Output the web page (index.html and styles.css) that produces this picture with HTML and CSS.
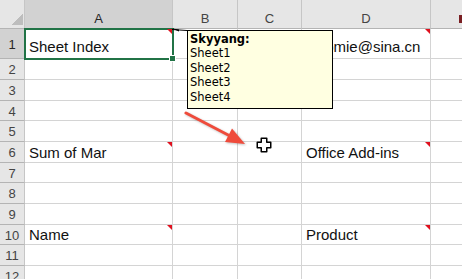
FILE: index.html
```html
<!DOCTYPE html>
<html lang="en">
<head>
  <meta charset="UTF-8">
  <title>Sheet Index</title>
  <link rel="stylesheet" href="styles.css">
</head>
<body>
  <div class="sheet">
    <div class="grid">
      <div class="cell corner"></div>
      <div class="cell col-head selected">A</div>
      <div class="cell col-head">B</div>
      <div class="cell col-head">C</div>
      <div class="cell col-head">D</div>
      <div class="cell col-head mark"></div>

      <div class="cell row-head selected">1</div>
      <div class="cell note active tall">Sheet Index</div>
      <div class="cell"></div>
      <div class="cell"></div>
      <div class="cell note tall">xiaomie@sina.cn</div>
      <div class="cell"></div>

      <div class="cell row-head">2</div>
      <div class="cell"></div><div class="cell"></div><div class="cell"></div><div class="cell"></div><div class="cell"></div>

      <div class="cell row-head">3</div>
      <div class="cell"></div><div class="cell"></div><div class="cell"></div><div class="cell"></div><div class="cell"></div>

      <div class="cell row-head">4</div>
      <div class="cell"></div><div class="cell"></div><div class="cell"></div><div class="cell"></div><div class="cell"></div>

      <div class="cell row-head">5</div>
      <div class="cell"></div><div class="cell"></div><div class="cell"></div><div class="cell"></div><div class="cell"></div>

      <div class="cell row-head">6</div>
      <div class="cell note">Sum of Mar</div>
      <div class="cell"></div>
      <div class="cell"></div>
      <div class="cell note">Office Add-ins</div>
      <div class="cell"></div>

      <div class="cell row-head">7</div>
      <div class="cell"></div><div class="cell"></div><div class="cell"></div><div class="cell"></div><div class="cell"></div>

      <div class="cell row-head">8</div>
      <div class="cell"></div><div class="cell"></div><div class="cell"></div><div class="cell"></div><div class="cell"></div>

      <div class="cell row-head">9</div>
      <div class="cell"></div><div class="cell"></div><div class="cell"></div><div class="cell"></div><div class="cell"></div>

      <div class="cell row-head">10</div>
      <div class="cell note">Name</div>
      <div class="cell"></div>
      <div class="cell"></div>
      <div class="cell note">Product</div>
      <div class="cell"></div>

      <div class="cell row-head">11</div>
      <div class="cell"></div><div class="cell"></div><div class="cell"></div><div class="cell"></div><div class="cell"></div>

      <div class="cell row-head">12</div>
      <div class="cell"></div><div class="cell"></div><div class="cell"></div><div class="cell"></div><div class="cell"></div>
    </div>

    <!-- comment popup for A1 -->
    <div class="comment">
      <b>Skyyang:</b><br>
      Sheet1<br>
      Sheet2<br>
      Sheet3<br>
      Sheet4
    </div>

    <svg class="overlay" width="462" height="279" viewBox="0 0 462 279">
      <line x1="172" y1="29.5" x2="187" y2="30.5" stroke="#000" stroke-width="1"/>
      <polygon points="172,28.5 179,29.5 179,31.5" fill="#000"/>
      <g class="arrow">
        <line x1="186" y1="113" x2="231" y2="136.5" stroke="#ef4b3b" stroke-width="3" stroke-linecap="round"/>
        <polygon points="245,144 232,128.5 225,142" fill="#ef4b3b"/>
      </g>
      <path d="M261.25 138.25 H266.75 V142.25 H270.75 V147.75 H266.75 V151.75 H261.25 V147.75 H257.25 V142.25 H261.25 Z"
            fill="#fff" stroke="#000" stroke-width="1.5" stroke-linejoin="round"/>
    </svg>
  </div>
</body>
</html>
```

FILE: styles.css
```css
body {
  margin: 0;
  background: #fff;
  font-family: "Liberation Sans", Arial, sans-serif;
  overflow: hidden;
}
.sheet {
  position: relative;
  width: 462px;
  height: 279px;
  overflow: hidden;
}
.grid {
  display: grid;
  width: 501px;
  grid-template-columns: 25px 148px 65px 64px 129px 70px;
  grid-template-rows: 29px 30px 21px 21px 20px 21px 21px 20px 21px 21px 20px 21px 21px;
}
.cell {
  position: relative;
  box-sizing: border-box;
  display: flex;
  align-items: flex-end;
  padding: 0 3px 1px 4px;
  border-right: 1px solid #d4d4d4;
  border-bottom: 1px solid #d4d4d4;
  font-size: 15px;
  line-height: 17px;
  color: #111;
  white-space: nowrap;
}
.tall {
  padding-bottom: 3px;
}
.corner,
.col-head,
.row-head {
  background: #e6e6e6;
  color: #444;
  justify-content: center;
  border-right-color: #c6c6c6;
  border-bottom-color: #b4b4b4;
}
.col-head {
  font-size: 13px;
  line-height: 15px;
  padding: 0 0 2px;
}
.row-head {
  align-items: center;
  font-size: 13px;
  line-height: 15px;
  padding: 1px 0 0;
}
.selected {
  background: #d2d2d2;
  color: #262626;
}
.corner::after {
  content: "";
  position: absolute;
  right: 1px;
  bottom: 3px;
  width: 11px;
  height: 11px;
  background: linear-gradient(135deg, transparent 50%, #bdbdbd 50%);
}
.mark::after {
  content: "";
  position: absolute;
  left: 28px;
  top: 15px;
  width: 4px;
  height: 8px;
  background: #7a1f23;
}
.note::after {
  content: "";
  position: absolute;
  top: 0;
  right: 0;
  border-top: 5px solid #e0101e;
  border-left: 5px solid transparent;
}
.active {
  z-index: 2;
  outline: 2px solid #217346;
  outline-offset: -1px;
}
.active::before {
  content: "";
  position: absolute;
  right: -4px;
  bottom: -4px;
  width: 5px;
  height: 5px;
  background: #217346;
  border: 1px solid #fff;
}
.comment {
  position: absolute;
  left: 187px;
  top: 30px;
  width: 146px;
  height: 79px;
  box-sizing: border-box;
  padding: 1px 2px;
  border: 1px solid #000;
  background: #ffffe1;
  font-family: "DejaVu Sans", Tahoma, sans-serif;
  font-size: 11.5px;
  line-height: 14.4px;
  color: #000;
  overflow: hidden;
  z-index: 3;
}
.overlay {
  position: absolute;
  top: 0;
  left: 0;
  z-index: 4;
  pointer-events: none;
}
.arrow {
  filter: drop-shadow(1px 1px 1px rgba(0, 0, 0, 0.25));
}
```
